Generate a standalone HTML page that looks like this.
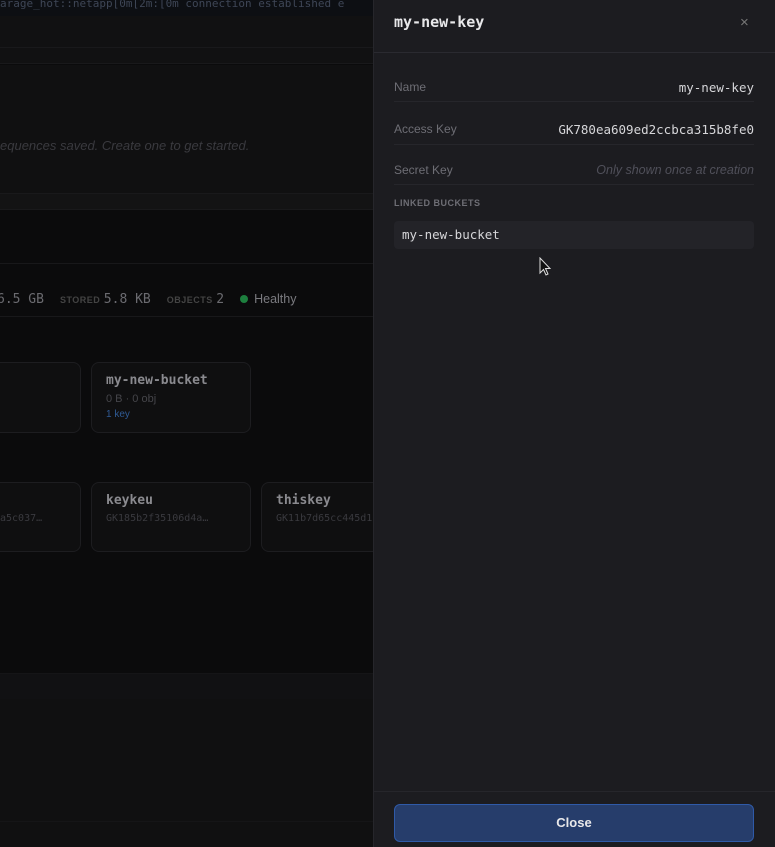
<!DOCTYPE html>
<html><head><style>
*{margin:0;padding:0;box-sizing:border-box}
body{width:775px;height:847px;overflow:hidden;background:#0b0b0c;font-family:"Liberation Sans",sans-serif;position:relative}
.a{position:absolute}
.mono{font-family:"DejaVu Sans Mono","Liberation Mono",monospace}
.card{position:absolute;border:1px solid #1d1d20;border-radius:8px;background:#0f0f10}
</style></head><body>
<div class="a mono" style="left:0;top:0;width:374px;height:16px;background:#0d0f13;color:#3e4656;font-size:11px;line-height:8px;white-space:nowrap;overflow:hidden">arage_hot::netapp[0m[2m:[0m connection established e</div>
<div class="a" style="left:0;top:16px;width:374px;height:48px;background:#111112;border-bottom:1px solid #19191b"></div>
<div class="a" style="left:0;top:47px;width:374px;height:1px;background:#19191b"></div>
<div class="a" style="left:0;top:65px;width:374px;height:128px;background:#101011"></div>
<div class="a" style="left:0;top:138px;color:#3a3a3f;font-size:13px;font-style:italic;white-space:nowrap">equences saved. Create one to get started.</div>
<div class="a" style="left:0;top:193px;width:374px;height:17px;background:#131314;border-top:1px solid #19191b;border-bottom:1px solid #19191b"></div>
<div class="a" style="left:0;top:263px;width:374px;height:54px;border-top:1px solid #18181a;border-bottom:1px solid #18181a"></div>
<div class="a" style="left:-3px;top:292px;font-size:12.5px;color:#6b6b70;white-space:nowrap"><span class="mono" style="font-size:13px">6.5 GB</span><span style="font-size:9px;font-weight:bold;letter-spacing:.5px;margin-left:16px;color:#444">STORED</span> <span class="mono" style="font-size:13px">5.8 KB</span><span style="font-size:9px;font-weight:bold;letter-spacing:.5px;margin-left:16px;color:#444">OBJECTS</span> <span class="mono" style="font-size:13px">2</span><span style="display:inline-block;width:8px;height:8px;border-radius:50%;background:#1d7f3e;margin:0 6px 0 16px"></span><span style="color:#7a7a7f">Healthy</span></div>
<div class="card" style="left:-10px;top:362px;width:91px;height:71px"></div>
<div class="card" style="left:91px;top:362px;width:160px;height:71px"></div>
<div class="a mono" style="left:106px;top:373px;font-size:13px;font-weight:bold;color:#8a8a8f">my-new-bucket</div>
<div class="a" style="left:106px;top:393px;font-size:11px;color:#45454a">0 B · 0 obj</div>
<div class="a" style="left:106px;top:409px;font-size:10px;color:#2f5a94">1 key</div>
<div class="card" style="left:-10px;top:482px;width:91px;height:70px"></div>
<div class="a mono" style="left:0;top:513px;font-size:10px;color:#3a3a3f">a5c037…</div>
<div class="card" style="left:91px;top:482px;width:160px;height:70px"></div>
<div class="a mono" style="left:106px;top:493px;font-size:13px;font-weight:bold;color:#8a8a8f">keykeu</div>
<div class="a mono" style="left:106px;top:513px;font-size:10px;color:#3a3a3f">GK185b2f35106d4a…</div>
<div class="card" style="left:261px;top:482px;width:130px;height:70px"></div>
<div class="a mono" style="left:276px;top:493px;font-size:13px;font-weight:bold;color:#8a8a8f">thiskey</div>
<div class="a mono" style="left:276px;top:513px;font-size:10px;color:#3a3a3f;white-space:nowrap;width:98px;overflow:hidden">GK11b7d65cc445d1</div>
<div class="a" style="left:0;top:673px;width:374px;height:26px;background:#111113;border-top:1px solid #151517"></div>
<div class="a" style="left:0;top:699px;width:374px;height:148px;background:#101011"></div>
<div class="a" style="left:0;top:821px;width:374px;height:1px;background:#151517"></div>

<div class="a" style="left:373px;top:0;width:402px;height:847px;background:#1c1c20;border-left:1px solid #26262b">
 <div class="a mono" style="left:20px;top:13px;font-size:15px;font-weight:bold;color:#e8e8ea">my-new-key</div>
 <div class="a" style="left:366px;top:14px;font-size:15px;color:#777">×</div>
 <div class="a" style="left:0;top:52px;width:402px;height:1px;background:#2a2a30"></div>
 <div class="a" style="left:20px;top:80px;width:360px;height:22px;border-bottom:1px solid #26262b;font-size:12px;color:#6e6e75">Name<span class="mono" style="float:right;color:#d6d6d9;font-size:12.5px">my-new-key</span></div>
 <div class="a" style="left:20px;top:122px;width:360px;height:23px;border-bottom:1px solid #26262b;font-size:12px;color:#6e6e75">Access Key<span class="mono" style="float:right;color:#d6d6d9;font-size:12.5px">GK780ea609ed2ccbca315b8fe0</span></div>
 <div class="a" style="left:20px;top:163px;width:360px;height:22px;border-bottom:1px solid #26262b;font-size:12px;color:#6e6e75">Secret Key<span style="float:right;color:#50505a;font-style:italic;font-size:12.5px">Only shown once at creation</span></div>
 <div class="a" style="left:20px;top:198px;font-size:9px;font-weight:bold;letter-spacing:.5px;color:#6e6e75">LINKED BUCKETS</div>
 <div class="a mono" style="left:20px;top:221px;width:360px;height:28px;background:#232328;border-radius:4px;padding:6px 8px;font-size:12.5px;color:#d6d6d9">my-new-bucket</div>
 <div class="a" style="left:0;top:791px;width:402px;height:1px;background:#26262b"></div>
 <div class="a" style="left:20px;top:804px;width:360px;height:38px;background:#263d6b;border:1px solid #2f5aa8;border-radius:6px;color:#e8e8ea;font-size:13px;font-weight:bold;text-align:center;line-height:36px">Close</div>
</div>
<svg class="a" style="left:539px;top:257px" width="13" height="20" viewBox="0 0 13 20"><path d="M1 1 L1 16 L4.5 12.5 L7 18 L9 17 L6.5 11.5 L11 11.5 Z" fill="#111" stroke="#ddd" stroke-width="1"/></svg>
</body></html>
